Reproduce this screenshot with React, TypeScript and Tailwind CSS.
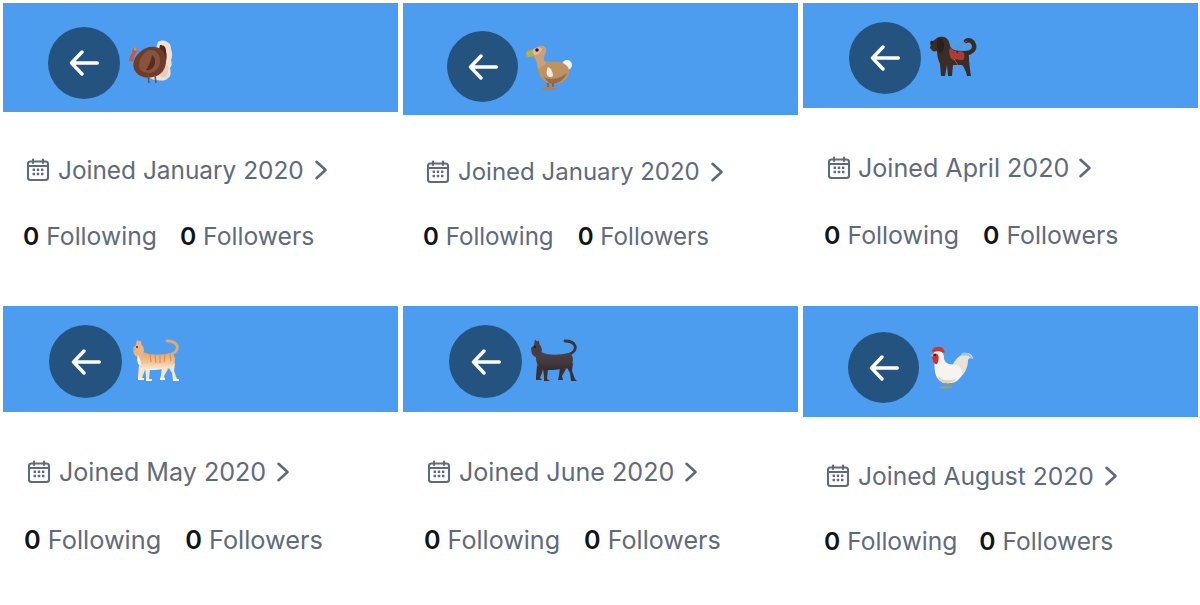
import React from "react";

const Calendar = () => (
  <svg viewBox="0 0 24 24" className="w-[24px] h-[24px] shrink-0" fill="none" stroke="#5f6b7c" strokeWidth="2.1" strokeLinecap="round" strokeLinejoin="round">
    <rect x="2" y="3.5" width="20" height="18.5" rx="2.5" />
    <path d="M2 8h20M7 1.5v3.5M17 1.5v3.5" />
    <g fill="#5f6b7c" stroke="none">
      <rect x="10.8" y="10.6" width="2.4" height="2.4" rx=".5" />
      <rect x="15" y="10.6" width="2.4" height="2.4" rx=".5" />
      <rect x="6.6" y="14.8" width="2.4" height="2.4" rx=".5" />
      <rect x="10.8" y="14.8" width="2.4" height="2.4" rx=".5" />
      <rect x="15" y="14.8" width="2.4" height="2.4" rx=".5" />
      <rect x="6.6" y="10.6" width="2.4" height="2.4" rx=".5" />
    </g>
  </svg>
);

const Chevron = () => (
  <svg viewBox="0 0 14 22" className="w-[14px] h-[22px] shrink-0" fill="none" stroke="#5f6b7c" strokeWidth="2.6" strokeLinecap="round" strokeLinejoin="round">
    <path d="M2.5 2.800 11.500 11l-9 8.200" />
  </svg>
);

const Arrow = () => (
  <svg viewBox="0 0 30 26" className="w-[30px] h-[26px]" fill="none" stroke="#fff" strokeWidth="3.4" strokeLinecap="round" strokeLinejoin="round">
    <path d="M28.300 13H2.500M13 2 2.500 13 13 24" />
  </svg>
);

const Turkey = () => (
  <svg viewBox="0 0 48 48" className="w-[48px] h-[48px] blur-[0.6px]">
    <path d="M30 3c3-2 7-2 9 0 3 1 4 4 4 7 1 3 2 7 0 11 1 3 1 6-1 8 1 4 1 9-2 10-2 3-7 3-11 2-4 0-8-2-9-5z" fill="#f1e0d2" />
    <path d="M32 6c4 0 6 2 6 6 1 4 1 9-1 13-2 3-7 3-9-2z" fill="#54281d" />
    <path d="M33 38c-3-3-5-6-4-10 3-2 9-3 11-1 1 3 0 7-2 11z" fill="#e9cdb9" />
    <path d="M27 8c7 1 11 6 11 14 0 8-5 15-13 16-8 2-16-1-19-8-2-6 1-13 6-17 4-4 10-6 15-5z" fill="#6e3c2a" />
    <path d="M24 11c5 1 9 6 8 13-1 6-6 10-11 10-6 0-11-4-10-9 1-7 7-15 13-14z" fill="#87533d" />
    <path d="M24 16c3 2 4 7 2 11-2 3-5 5-8 4 3-4 5-10 6-15z" fill="#5a2c1e" />
    <path d="M6 21c-2 2-4 2-5 0 0-3 2-5 3-7 0-3 1-5 3-5s3 2 2 4c-1 2-3 3-3 5z" fill="#bd5d47" />
    <path d="M6 9c1-1 3 0 3 2-1 1-2 1-3 0z" fill="#e08a6c" />
    <path d="M20 36l1 8M27 36l1 8" stroke="#6a5548" strokeWidth="1.6" />
  </svg>
);

const Dodo = () => (
  <svg viewBox="0 0 48 48" className="w-[48px] h-[48px] blur-[0.6px]">
    <circle cx="41" cy="22" r="5" fill="#f6f3ee" />
    <path d="M12 18c2-4 8 2 16 1 8-1 16 3 15 11-1 8-10 12-17 11-8-1-14-8-14-15z" fill="#bf9265" />
    <path d="M8 11C8 6 12 2 17 3c4 1 4 6 2 9-2 3-1 6 1 9l-8 5c-1-6-2-10-4-12z" fill="#c8a07a" />
    <path d="M5 9c2-4 8-6 11-3-1 3-4 6-8 6z" fill="#e9b8a4" />
    <path d="M0 10c1-3 5-4 7-2l1 5c-3 1-7 2-8-1z" fill="#b7ab54" />
    <circle cx="11" cy="7" r="1.800" fill="#2a1c16" />
    <path d="M18 34c5 3 14 3 23-4-3 7-9 11-15 11-4-1-6-4-8-7z" fill="#9a6b44" />
    <path d="M22 24c3 1 5 5 5 9-2 2-5 1-6-1-1-3 0-6 1-8z" fill="#f2ead9" />
    <path d="M22 40v4M27 40v4" stroke="#a35f29" strokeWidth="2" />
    <path d="M15 46c3-2 12-2 16 0-3 1-13 1-16 0z" fill="#c87a35" />
  </svg>
);

const Dog = () => (
  <svg viewBox="0 0 48 48" className="w-[48px] h-[48px] blur-[0.6px]">
    <path d="M36 19c5 0 9-3 8-8-1-4-5-6-8-4" fill="none" stroke="#3a2a24" strokeWidth="4.500" strokeLinecap="round" />
    <path d="M1 8c3-1 5-4 8-5 5-1 9 1 10 5 1 3 1 5 3 7 4 2 9 2 13 2 3 1 4 4 4 7 0 4 1 11 2 18h-4c-1-5-3-9-5-11h-9l-1 11h-4l-1-11-2 11h-4l-1-12c-2-4-3-9-3-13-3 1-5 0-6-2-2-1-1-3 0-3C0 11 0 9 1 8z" fill="#3c2c26" />
    <path d="M9 4c3 0 5 3 5 7s-2 8-4 8-3-5-3-8 0-6 2-7z" fill="#2d201c" />
    <circle cx="1.600" cy="8" r="1.200" fill="#15100e" />
    <path d="M20 14c2 2 4 3 6 3l1 3 2-3c2 0 3 1 4 1 2 2 2 6 0 8-3 0-5 0-6-1l-2 1c-3 0-5-2-5-4-1-3-1-6 0-8z" fill="#b23a33" />
    <path d="M26 13c2-3 5-5 7-6M29 14c2-3 5-5 8-7M24 25l4 6" stroke="#7d8a88" strokeWidth=".7" fill="none" />
  </svg>
);

const Cat = ({ dark }: { dark?: boolean }) => {
  const top = dark ? "#4b4448" : "#e8a567";
  const bot = dark ? "#332b2c" : "#faf0e2";
  const id = dark ? "catdark" : "catlight";
  const fill = `url(#${id})`;
  const leg = dark ? "#3a3133" : "#f6e4cf";
  return (
    <svg viewBox="0 0 48 48" className="w-[48px] h-[48px] blur-[0.6px]">
      <defs>
        <linearGradient id={id} x1="0" y1="0" x2="0" y2="1">
          <stop offset="0" stopColor={top} />
          <stop offset=".6" stopColor={dark ? "#40383b" : "#f0c698"} />
          <stop offset="1" stopColor={bot} />
        </linearGradient>
      </defs>
      <path d="M40 17c4-2 6-5 5-8-1-3-5-5-10-5" fill="none" stroke={dark ? "#3c3436" : "#e5a86d"} strokeWidth="2.800" strokeLinecap="round" />
      <path d="M7 28l6 5-3 8 2 2H6v-3zM13 30l5 2-1 10 3 2h-6v-4zM30 31l6 1-4 7 1 4h-5l1-5zM36 29l7-3-1 8 3 8 2 2h-6l-1-8z" fill={leg} />
      <path d="M11 15c9 4 19 3 27 1 5 1 6 6 4 11-2 4-5 5-10 5-6 1-12 1-18 1-5-1-8-6-8-13z" fill={fill} />
      <path d="M1 11l3-3 1-5.500 2 2 2-1 .5 4c2 2 3 5 2 8-1 3-3 5-5 5-3-1-5-3-5-6z" fill={dark ? "#453d41" : "#eeb582"} />
      {dark ? (
        <circle cx="5" cy="10" r="1" fill="#1d1718" />
      ) : (
        <g>
          <path d="M6 18c2 3 3 8 3 11l-3-2c-1-4-1-6 0-9z" fill="#fbf3e8" />
          <path d="M6 41h6v2H6zM14 42h6v2h-6zM28 41h5v2h-5zM41 42h6v2h-6z" fill="#fff" />
          <path d="M18 17l1 8M23 18l1 8M28 18v8M33 17l-1 8M38 17l1 7" stroke="#d98e4e" strokeWidth="1.200" />
          <circle cx="5" cy="10" r="1" fill="#3a2a1e" />
          <path d="M1 11l3 1-2 2z" fill="#d59a86" />
        </g>
      )}
    </svg>
  );
};

const Rooster = () => (
  <svg viewBox="0 0 48 48" className="w-[48px] h-[48px] blur-[0.6px]">
    <path d="M22 22c4-8 10-13 16-13 3 1 5 3 5 6-2-2-4-1-5 1 0 8-4 16-11 20z" fill="#e9e2d8" />
    <path d="M31 10c4-3 9-1 12 5l-2-1c-3-3-6-3-10-2z" fill="#a9c2d0" />
    <path d="M3 12c0-3 3-6 7-5 3 1 4 4 4 7 0 3 2 5 5 6 4 1 8 0 11 3 3 4 2 9-1 12-3 4-9 5-14 4-6-1-9-6-10-11-1-5 0-10-1-13-1-2-2-2-1-3z" fill="#f7f3ee" />
    <path d="M8 32c4 5 11 5 18 3-3 4-9 5-13 4-2-1-4-4-5-7z" fill="#ddd3c5" />
    <path d="M2 8c0-3 2-5 5-5 3-1 6 0 7 3 1 1 1 3 0 3-3-2-8-2-12-1z" fill="#d7332b" />
    <path d="M2 11c2-2 5-2 6 0 1 2 1 6-1 9-2 1-4-2-4-4-1-2-1-3-1-5z" fill="#cf2f28" />
    <path d="M0 11l3-1v3z" fill="#d9b04a" />
    <circle cx="5" cy="11" r="1" fill="#2a1a14" />
    <path d="M16 39l-1 4M20 39v5" stroke="#8f9a6b" strokeWidth="2" />
    <path d="M8 44c3-2 9-2 15-1-5 2-11 2-15 1z" fill="#9aa27a" />
  </svg>
);

const cards = [
  { id: "turkey", banner: "h-[109px] pl-[45px] pt-[24px]", circle: "w-[72px] h-[72px]", animal: <Turkey />, am: "ml-[8px] -mt-[2px]", rows: "pl-[20px] pt-[43px]", t: "text-[24.4px] gap-[8px]", f: "text-[24.7px] gap-[23px]", second: "mt-[36px]", join: "Joined January 2020", indent: "ml-[3px]" },
  { id: "dodo", banner: "h-[112px] pl-[44px] pt-[28px]", circle: "w-[71px] h-[71px]", animal: <Dodo />, am: "ml-[8px] -mt-[2px]", rows: "pl-[20px] pt-[42px]", t: "text-[24px] gap-[8px]", f: "text-[24.1px] gap-[24px]", second: "mt-[35px]", join: "Joined January 2020", indent: "ml-[3px]" },
  { id: "dog", banner: "h-[105px] pl-[46px] pt-[19px]", circle: "w-[72px] h-[72px]", animal: <Dog />, am: "ml-[9px] -mt-[2px]", rows: "pl-[21px] pt-[45px]", t: "text-[25.1px] gap-[7px]", f: "text-[24.9px] gap-[24px]", second: "mt-[37px]", join: "Joined April 2020", indent: "ml-[3px]" },
  { id: "cat", banner: "h-[106px] pl-[46px] pt-[19px]", circle: "w-[73px] h-[73px]", animal: <Cat />, am: "ml-[10px] -mt-[1px]", rows: "pl-[21px] pt-[45px]", t: "text-[25.1px] gap-[8px]", f: "text-[25.3px] gap-[24px]", second: "mt-[38px]", join: "Joined May 2020", indent: "ml-[3px]" },
  { id: "black", banner: "h-[106px] pl-[46px] pt-[19px]", circle: "w-[73px] h-[73px]", animal: <Cat dark />, am: "ml-[8px] -mt-[1px]", rows: "pl-[21px] pt-[45px]", t: "text-[25.1px] gap-[8px]", f: "text-[25.1px] gap-[24px]", second: "mt-[38px]", join: "Joined June 2020", indent: "ml-[3px]" },
  { id: "rooster", banner: "h-[111px] pl-[45px] pt-[26px]", circle: "w-[71px] h-[71px]", animal: <Rooster />, am: "ml-[11px] -mt-[1px]", rows: "pl-[21px] pt-[44px]", t: "text-[24.6px] gap-[8px]", f: "text-[24.6px] gap-[22px]", second: "mt-[35px]", join: "Joined August 2020", indent: "ml-[2px]" },
];

export default function App() {
  return (
    <div className="w-[1200px] h-[605px] bg-white overflow-hidden pl-[3px] pt-[3px] grid grid-cols-[395px_395px_395px] grid-rows-[303px_296px] gap-x-[5px] font-['Inter',sans-serif] text-[#5f6b7c]">
      {cards.map((c) => (
        <div key={c.id} className="flex flex-col">
          <div className={`bg-[#4c9df0] flex items-start shrink-0 ${c.banner}`}>
            <button className={`rounded-full bg-[#255380] flex items-center justify-center shrink-0 ${c.circle}`}>
              <Arrow />
            </button>
            <div className={`self-start mt-[12px] ${c.am}`}>{c.animal}</div>
          </div>
          <div className={`flex flex-col ${c.rows}`}>
            <div className={`flex items-center leading-[30px] ${c.t} ${c.indent}`}>
              <Calendar />
              <span>{c.join}</span>
              <span className="ml-[2px]"><Chevron /></span>
            </div>
            <div className={`flex leading-[30px] ${c.second} ${c.f}`}>
              <span><span className="font-semibold text-[#0f1419]">0</span> Following</span>
              <span><span className="font-semibold text-[#0f1419]">0</span> Followers</span>
            </div>
          </div>
        </div>
      ))}
    </div>
  );
}
